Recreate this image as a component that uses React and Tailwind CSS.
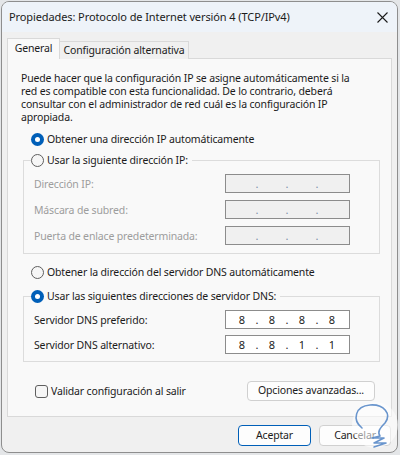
import React from "react";

const font = { fontFamily: '"Noto Sans", "Segoe UI", sans-serif' };

function Radio({ checked }) {
  return checked ? (
    <span className="flex h-[13px] w-[13px] shrink-0 items-center justify-center rounded-full bg-[#005fb8]">
      <span className="h-[5px] w-[5px] rounded-full bg-white"></span>
    </span>
  ) : (
    <span className="h-[13px] w-[13px] shrink-0 rounded-full border border-[#5f5f5f] bg-[#f6f6f6]"></span>
  );
}

function RadioRow({ checked, label, className = "" }) {
  return (
    <div className={`flex h-[14px] items-center gap-[3px] ${className}`}>
      <Radio checked={checked} />
      <span className="text-[10.5px] leading-[14px] tracking-[-0.15px] text-[#1b1b1b]">{label}</span>
    </div>
  );
}

function IpBox({ values, disabled }) {
  const parts = values || ["", "", "", ""];
  return (
    <div
      className={`flex h-[19px] w-[125px] items-center border pl-[3px] ${
        disabled
          ? "border-[#8c8c8c] bg-[#f0f0f0] text-[#a0a0a0]"
          : "border-[#8c8c8c] bg-white text-[#1b1b1b]"
      }`}
    >
      {parts.map((p, i) => (
        <React.Fragment key={i}>
          <span className="w-[26px] text-center text-[11px] leading-[17px]">{p}</span>
          {i < 3 ? (
            <span className={`w-[4px] text-center text-[11px] leading-[17px] ${disabled ? "text-[#7a8fa8]" : ""}`}>
              .
            </span>
          ) : null}
        </React.Fragment>
      ))}
    </div>
  );
}

function FieldRow({ label, values, disabled }) {
  return (
    <div className="flex h-[19px] items-center justify-between">
      <span
        className={`text-[10.5px] leading-[14px] tracking-[-0.15px] ${
          disabled ? "text-[#9d9d9d]" : "text-[#1b1b1b]"
        }`}
      >
        {label}
      </span>
      <IpBox values={values} disabled={disabled} />
    </div>
  );
}

export default function App() {
  return (
    <div className="relative h-[455px] w-[400px] overflow-hidden bg-[#e4e6e8] pl-px pt-px" style={font}>
      <div className="flex h-[452px] w-[397px] flex-col overflow-hidden rounded-[8px] border border-[#8e8e8e] bg-[#f0f0f0]">
        {/* title bar */}
        <div className="flex h-[30px] shrink-0 items-center justify-between bg-[#eef3f9] pl-[7px] pr-[9px]">
          <span className="text-[11px] leading-[16px] tracking-[-0.1px] text-[#1b1b1b]">
            Propiedades: Protocolo de Internet versión 4 (TCP/IPv4)
          </span>
          <svg width="11" height="11" viewBox="0 0 11 11" className="mt-px">
            <path d="M0.5 0.5 L10.5 10.5 M10.5 0.5 L0.5 10.5" stroke="#1b1b1b" strokeWidth="1.1" />
          </svg>
        </div>

        <div className="flex flex-col px-[5px] pt-[6px]">
          {/* tabs */}
          <div className="relative z-10 flex h-[21px] items-end">
            <div className="flex h-[21px] w-[53px] items-center justify-center border border-b-0 border-[#d9d9d9] bg-[#f9f9f9] text-[10.5px] tracking-[-0.15px] text-[#1b1b1b]">
              General
            </div>
            <div className="flex h-[18px] w-[129px] items-center justify-center border border-b-0 border-l-0 border-[#d9d9d9] bg-[#f0f0f0] text-[10.5px] tracking-[-0.15px] text-[#1b1b1b]">
              Configuración alternativa
            </div>
          </div>

          {/* panel */}
          <div className="-mt-px flex h-[359px] w-[385px] flex-col border border-[#d9d9d9] bg-[#f9f9f9] pl-[13px] pr-[11px] pt-[13px]">
            <p className="pr-[20px] text-[10.5px] leading-[13px] tracking-[-0.15px] text-[#1b1b1b]">
              Puede hacer que la configuración IP se asigne automáticamente si la red es compatible con esta funcionalidad. De lo contrario, deberá consultar con el administrador de red cuál es la configuración IP apropiada.
            </p>

            <RadioRow checked label="Obtener una dirección IP automáticamente" className="ml-[10px] mt-[8px]" />

            <fieldset className="ml-[2px] mt-[7px] border border-[#dcdcdc] pb-[8px] pl-[7px] pr-[29px]">
              <legend className="pr-[4px]">
                <RadioRow label="Usar la siguiente dirección IP:" />
              </legend>
              <div className="mt-[7px] flex flex-col gap-[7px] pl-[3px]">
                <FieldRow label="Dirección IP:" disabled />
                <FieldRow label="Máscara de subred:" disabled />
                <FieldRow label="Puerta de enlace predeterminada:" disabled />
              </div>
            </fieldset>

            <RadioRow label="Obtener la dirección del servidor DNS automáticamente" className="ml-[10px] mt-[11px]" />

            <fieldset className="ml-[2px] mt-[10px] border border-[#dcdcdc] pb-[7px] pl-[7px] pr-[29px]">
              <legend className="pr-[4px]">
                <RadioRow checked label="Usar las siguientes direcciones de servidor DNS:" />
              </legend>
              <div className="mt-[7px] flex flex-col gap-[6px] pl-[3px]">
                <FieldRow label="Servidor DNS preferido:" values={["8", "8", "8", "8"]} />
                <FieldRow label="Servidor DNS alternativo:" values={["8", "8", "1", "1"]} />
              </div>
            </fieldset>

            <div className="mt-[19px] flex items-center justify-between pr-[5px]">
              <div className="ml-[14px] flex items-center gap-[3px]">
                <span className="h-[13px] w-[13px] rounded-[3px] border border-[#5f5f5f] bg-[#f6f6f6]"></span>
                <span className="text-[10.5px] leading-[14px] tracking-[-0.15px] text-[#1b1b1b]">
                  Validar configuración al salir
                </span>
              </div>
              <button className="flex h-[20px] w-[128px] items-center justify-center rounded-[4px] border border-[#d0d0d0] bg-[#fdfdfd] text-[10.5px] tracking-[-0.15px] text-[#1b1b1b]">
                Opciones avanzadas...
              </button>
            </div>
          </div>

          {/* footer */}
          <div className="mt-[8px] flex justify-end gap-[8px] pr-px">
            <button className="flex h-[21px] w-[73px] items-center justify-center rounded-[4px] border border-[#005fb8] bg-[#fdfdfd] text-[10.5px] tracking-[-0.15px] text-[#1b1b1b]">
              Aceptar
            </button>
            <button className="flex h-[21px] w-[72px] items-center justify-center rounded-[4px] border border-[#d0d0d0] bg-[#fdfdfd] text-[10.5px] tracking-[-0.15px] text-[#1b1b1b]">
              Cancelar
            </button>
          </div>
        </div>
      </div>

      {/* watermark */}
      <svg className="pointer-events-none absolute left-0 top-0" width="400" height="455" viewBox="0 0 400 455">
        <circle cx="375" cy="425" r="23" fill="#ffffff" fillOpacity="0.55" />
        <path
          d="M362 428 C352 420 355 406 370 405 C384 404 392 414 385 423 C380 428 377 432 380 436 L372 438 L384 438 L374 443 L386 443 L374 447"
          fill="none"
          stroke="#4f82c4"
          strokeOpacity="0.85"
          strokeWidth="1.6"
          strokeLinecap="round"
          strokeLinejoin="round"
        />
      </svg>
    </div>
  );
}
